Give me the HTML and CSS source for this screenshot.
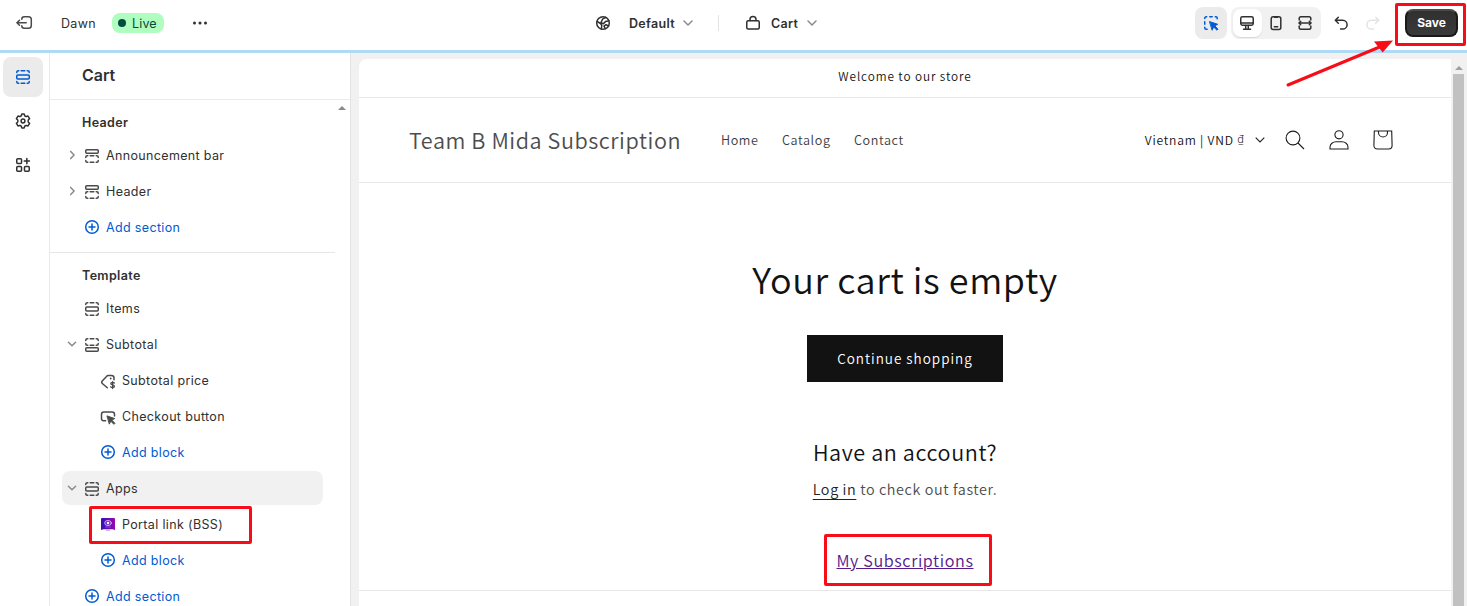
FILE: index.html
```html
<!DOCTYPE html>
<html lang="en">
<head>
<meta charset="utf-8">
<title>Dawn - Cart</title>
<link rel="stylesheet" href="styles.css">
</head>
<body>
<svg class="defs" width="0" height="0" aria-hidden="true">
  <defs>
    <g id="sec-mid">
      <rect x="3.75" y="8" width="12.5" height="4" rx="1"/>
      <path d="M3.75 5.5v-.3c0-.8.6-1.45 1.45-1.45h.6M8.2 3.75h3.6M14.2 3.75h.6c.8 0 1.45.6 1.45 1.45v.3M3.75 14.5v.3c0 .8.6 1.45 1.45 1.45h.6M8.2 16.25h3.6M14.2 16.25h.6c.8 0 1.45-.6 1.45-1.45v-.3"/>
    </g>
    <g id="sec-top">
      <rect x="3.75" y="3.75" width="12.5" height="3.5" rx="1"/>
      <path d="M3.75 11.4v-.2c0-.8.6-1.45 1.45-1.45h.6M8.2 9.75h3.6M14.2 9.75h.6c.8 0 1.45.6 1.45 1.45v.2M3.75 14.6v.2c0 .8.6 1.45 1.45 1.45h.6M8.2 16.25h3.6M14.2 16.25h.6c.8 0 1.45-.6 1.45-1.45v-.2"/>
    </g>
    <g id="sec-bottom">
      <rect x="3.75" y="12.75" width="12.5" height="3.5" rx="1"/>
      <path d="M3.75 5.4v-.2c0-.8.6-1.45 1.45-1.45h.6M8.2 3.75h3.6M14.2 3.75h.6c.8 0 1.45.6 1.45 1.45v.2M3.75 8.6v.2c0 .8.6 1.45 1.45 1.45h.6M8.2 10.25h3.6M14.2 10.25h.6c.8 0 1.45-.6 1.45-1.45v-.2"/>
    </g>
    <g id="plus-circle"><circle cx="10" cy="10" r="6.3"/><path d="M10 7v6M7 10h6"/></g>
    <path id="chev-down" d="M6 8l4 4 4-4"/>
    <path id="chev-right" d="M8.7 6.4l3.4 3.6-3.4 3.6"/>
    <path id="chev-small" d="M6.4 8.300L10 11.700l3.600-3.400"/>
  </defs>
</svg>
<div class="app">
  <header class="topbar">
    <div class="theme">
      <svg class="icon exit" viewBox="0 0 20 20"><path d="M6.800 6.200c0-1.600.9-2.500 2.400-2.500h4.300c1.700 0 2.800 1 2.800 2.800v6c0 1.700-1.100 2.800-2.800 2.800H9.200c-1.500 0-2.400-.9-2.400-2.500M11.200 9.700H2M4.500 7.200L1.900 9.700l2.600 2.500"/></svg>
      <span class="theme-name">Dawn</span>
      <span class="badge"><i class="dot"></i>Live</span>
      <svg class="icon more" viewBox="0 0 20 20"><g fill="currentColor" stroke="none"><circle cx="4.500" cy="10" r="1.500"/><circle cx="10" cy="10" r="1.500"/><circle cx="15.500" cy="10" r="1.500"/></g></svg>
    </div>
    <div class="pickers">
      <svg class="icon globe" viewBox="0 0 20 20"><circle cx="10" cy="10" r="6.300"/><path d="M4 8.300l3.500 2.200 1.300 1.700-.5 3.800M12.800 4.400L9.500 6.200 8 9.600l2.400 1.100 2.300-2.300 3.300-.6M11 13.200l2-1.500 2.600 1.200M11 13.200l1.300 2.500"/></svg>
      <span class="picker-label label-default">Default</span>
      <svg class="icon chev" viewBox="0 0 20 20"><use href="#chev-down"/></svg>
      <i class="sep"></i>
      <svg class="icon bag" viewBox="0 0 20 20"><rect x="3.750" y="7.700" width="12.500" height="8.300" rx="1.500"/><path d="M7 7.500V6.600a3 3 0 0 1 6 0v.9"/></svg>
      <span class="picker-label label-cart">Cart</span>
      <svg class="icon chev" viewBox="0 0 20 20"><use href="#chev-down"/></svg>
    </div>
    <div class="tools">
      <span class="inspector"><svg class="icon blue" viewBox="0 0 20 20"><path d="M3.750 5.600v-.4c0-.8.6-1.450 1.450-1.450h.5M8.800 3.750h2.400M14.300 3.750h.5c.8 0 1.450.6 1.450 1.450v.5M3.750 8.800v2.400M3.750 14.300v.5c0 .8.6 1.450 1.450 1.450h.9"/><path d="M8.800 8.700l7.900 2.600-3 1.500 3.300 3.400-1 1-3.400-3.300-1.300 3z" fill="currentColor" stroke-width="1"/></svg></span>
      <span class="devices">
        <span class="device active"><svg class="icon" viewBox="0 0 20 20"><rect x="3.750" y="3.750" width="12.500" height="8.500" rx="1.700"/><path d="M4 9.900h12M8.700 12.500v3.200M11.300 12.500v3.200M6.500 16.200h7"/></svg></span>
        <span class="device"><svg class="icon" viewBox="0 0 20 20"><rect x="5.200" y="3.750" width="9.600" height="12.700" rx="2"/><path d="M8.500 4.200h3M8.300 13.700h3.400"/></svg></span>
        <span class="device"><svg class="icon" viewBox="0 0 20 20"><path d="M4.200 7V5.500c0-1 .8-1.750 1.750-1.750h8.100c1 0 1.750.8 1.750 1.750V7M4.200 13v1.500c0 1 .8 1.750 1.750 1.750h8.100c1 0 1.750-.8 1.750-1.750V13M3.900 10h12.200M5.700 8.300L3.900 10l1.800 1.700M14.300 8.300l1.800 1.700-1.800 1.700"/></svg></span>
      </span>
      <svg class="icon undo" viewBox="0 0 20 20"><path d="M7.300 4.300L4.300 7.300l3 3M4.500 7.300h7.200a4.400 4.400 0 0 1 0 8.800H9.600"/></svg>
      <svg class="icon redo" viewBox="0 0 20 20"><path d="M12.700 4.300l3 3-3 3M15.500 7.300H8.300a4.400 4.400 0 0 0 0 8.800h2.100"/></svg>
      <button class="save">Save</button>
    </div>
  </header>
  <div class="body">
    <nav class="rail">
      <span class="rail-item active"><svg class="icon blue" viewBox="0 0 20 20"><use href="#sec-mid"/></svg></span>
      <span class="rail-item"><svg class="icon dark" viewBox="0 0 20 20"><path d="M8.300 4.700 L8.800 3.100 H11.200 L11.700 4.700 Q12.200 5.700 13.300 5.500 L15 5.100 L16.600 7.600 L15.400 8.800 Q14.700 10 15.400 11.200 L16.600 12.400 L15 14.900 L13.300 14.500 Q12.200 14.300 11.700 15.300 L11.200 16.900 H8.800 L8.300 15.300 Q7.800 14.300 6.700 14.500 L5 14.900 L3.400 12.400 L4.600 11.200 Q5.300 10 4.600 8.800 L3.400 7.600 L5 5.100 L6.700 5.500 Q7.800 5.700 8.300 4.700z"/><circle cx="10" cy="10" r="1.900"/></svg></span>
      <span class="rail-item"><svg class="icon dark" viewBox="0 0 20 20"><rect x="3.750" y="3.750" width="4.800" height="4.800" rx="1"/><rect x="3.750" y="11.450" width="4.800" height="4.800" rx="1"/><rect x="11.450" y="11.450" width="4.800" height="4.800" rx="1"/><path d="M13.850 3.500v5.200M11.250 6.100h5.200"/></svg></span>
    </nav>
    <aside class="sidebar">
      <h2 class="panel-title">Cart</h2>
      <svg class="scroll-cap" viewBox="0 0 8 4"><path d="M4 0l4 4H0z"/></svg>
      <section class="group">
        <h3 class="group-title">Header</h3>
        <div class="row"><svg class="icon twist" viewBox="0 0 20 20"><use href="#chev-right"/></svg><svg class="icon" viewBox="0 0 20 20"><use href="#sec-top"/></svg><span>Announcement bar</span></div>
        <div class="row"><svg class="icon twist" viewBox="0 0 20 20"><use href="#chev-right"/></svg><svg class="icon" viewBox="0 0 20 20"><use href="#sec-top"/></svg><span>Header</span></div>
        <div class="row leaf add"><svg class="icon" viewBox="0 0 20 20"><use href="#plus-circle"/></svg><span>Add section</span></div>
      </section>
      <section class="group">
        <h3 class="group-title">Template</h3>
        <div class="row leaf"><svg class="icon" viewBox="0 0 20 20"><use href="#sec-mid"/></svg><span>Items</span></div>
        <div class="row"><svg class="icon twist" viewBox="0 0 20 20"><use href="#chev-small"/></svg><svg class="icon" viewBox="0 0 20 20"><use href="#sec-bottom"/></svg><span>Subtotal</span></div>
        <div class="row nested"><svg class="icon" viewBox="0 0 20 20"><path d="M9.300 16.800L4.300 12.500c-.8-.7-.8-1.700-.1-2.400l4.300-4.700c.5-.6 1.100-.8 1.800-.8h3.200c1.500 0 2.500 1 2.500 2.400v1.800"/><circle cx="12.700" cy="7.500" r=".9" fill="currentColor" stroke="none"/><path d="M16.300 12c-.4-.5-1-.7-1.700-.7-1 0-1.800.5-1.800 1.300 0 1.900 3.600.8 3.600 2.700 0 .8-.8 1.300-1.800 1.300-.8 0-1.500-.3-1.900-.8M14.600 10.700v6.800" stroke-width="1.300"/></svg><span>Subtotal price</span></div>
        <div class="row nested"><svg class="icon" viewBox="0 0 20 20"><path d="M7.600 13.800H5.800c-1.300 0-2.300-1-2.300-2.300V7.200c0-1.300 1-2.300 2.300-2.300h8.400c1.300 0 2.300 1 2.300 2.300V9"/><path d="M9.300 9l7.400 2.600-2.900 1.500 3.100 3.200-1 1-3.200-3.200-1.200 2.700z" fill="currentColor" stroke-width="1"/></svg><span>Checkout button</span></div>
        <div class="row nested add"><svg class="icon" viewBox="0 0 20 20"><use href="#plus-circle"/></svg><span>Add block</span></div>
        <div class="row selected"><svg class="icon twist" viewBox="0 0 20 20"><use href="#chev-small"/></svg><svg class="icon" viewBox="0 0 20 20"><use href="#sec-mid"/></svg><span>Apps</span></div>
        <div class="row nested"><svg class="icon" viewBox="0 0 20 20"><defs><linearGradient id="app-fill" x1="0" x2="1"><stop offset="0" stop-color="#3010b8"/><stop offset="1" stop-color="#9a08b0"/></linearGradient></defs><path d="M4 3h12a1 1 0 0 1 1 1v11l-2.500-.8h-9L3 15V4a1 1 0 0 1 1-1z" fill="url(#app-fill)" stroke="none"/><ellipse cx="10" cy="8" rx="3.300" ry="2.500" stroke="#d0b0ff" stroke-width="1"/><circle cx="10" cy="8" r="1.300" fill="#fff" stroke="none"/><path d="M7.500 12h5" stroke="#9a70e8" stroke-width=".7"/><path d="M8.300 15.300h3.400" stroke="#b8a0e8" stroke-width="1"/></svg><span>Portal link (BSS)</span></div>
        <div class="row nested add"><svg class="icon" viewBox="0 0 20 20"><use href="#plus-circle"/></svg><span>Add block</span></div>
        <div class="row leaf add"><svg class="icon" viewBox="0 0 20 20"><use href="#plus-circle"/></svg><span>Add section</span></div>
      </section>
    </aside>
    <main class="stage">
      <div class="preview">
        <div class="announcement">Welcome to our store</div>
        <div class="store-header">
          <span class="store-name">Team B Mida Subscription</span>
          <span class="nav-link home">Home</span><span class="nav-link catalog">Catalog</span><span class="nav-link">Contact</span>
          <span class="locale"><span class="locale-text">Vietnam | VND <span class="dong">₫</span></span><svg class="caret" viewBox="0 0 10 6"><path d="M.7.7L5 5 9.300.7"/></svg></span>
          <svg class="store-icon" viewBox="0 0 20 20"><circle cx="8" cy="8" r="6.900"/><path d="M13 13l6 6"/></svg>
          <svg class="store-icon" viewBox="0 0 20 20"><circle cx="10" cy="4.800" r="4.100"/><path d="M1 19v-1.800c0-3.400 3-5.400 6-5.400h6c3 0 6 2 6 5.400V19z"/></svg>
          <svg class="store-icon" viewBox="0 0 20 20"><path d="M1.300 1h17.400l.4 14.500c0 2-1.500 3.500-3.500 3.500H4.400c-2 0-3.500-1.500-3.500-3.500zM5.500 1v1.500a4.500 4.500 0 0 0 9 0V1"/></svg>
        </div>
        <div class="cart">
          <h1 class="cart-title">Your cart is empty</h1>
          <a class="continue">Continue shopping</a>
          <h2 class="account">Have an account?</h2>
          <p class="login"><a class="login-link">Log in</a> to check out faster.</p>
          <a class="subscriptions">My Subscriptions</a>
        </div>
      </div>
      <div class="scrollbar"><svg class="scroll-arrow" viewBox="0 0 8 4"><path d="M4 0l4 4H0z"/></svg><i class="thumb"></i></div>
    </main>
  </div>
  <i class="mark mark-save"></i>
  <i class="mark mark-portal"></i>
  <i class="mark mark-subs"></i>
  <svg class="arrow" viewBox="0 0 120 60"><path d="M8 55L102 16" stroke="#f80c18" stroke-width="3" stroke-linecap="round"/><path d="M113 10.500L94 11.500 102.700 22.500z" fill="#f80c18"/></svg>
</div>
</body>
</html>
```

FILE: styles.css
```css
* { box-sizing: border-box; }
body { margin: 0; font-family: Inter, "Liberation Sans", sans-serif; font-size: 12.5px; color: #303030; }
h1, h2, h3, p { margin: 0; }
.defs { position: absolute; }
.app { position: relative; width: 1467px; height: 606px; overflow: hidden; background: #fff; display: flex; flex-direction: column; }
.icon { width: 20px; height: 20px; flex: none; fill: none; stroke: currentColor; stroke-width: 1.5; stroke-linecap: round; stroke-linejoin: round; color: #4a4a4a; }
.icon.blue { color: #005bd3; }
.icon.dark { color: #303030; }

.topbar { height: 53px; flex: none; display: flex; align-items: flex-start; border-bottom: 3px solid #b0d9f6; }
.theme { display: flex; align-items: center; height: 46px; padding-left: 15px; width: 594px; }
.theme-name { margin-left: 26px; width: 51px; letter-spacing: .35px; }
.badge { display: flex; align-items: center; gap: 6px; width: 52px; height: 20px; padding-left: 6px; border-radius: 8px; background: #affebf; color: #014b40; letter-spacing: .15px; }
.dot { width: 8px; height: 8px; border-radius: 50%; background: #014b40; }
.more { margin-left: 26px; color: #303030; }
.pickers { display: flex; align-items: center; height: 46px; width: 300px; }
.pickers .globe, .pickers .bag { color: #303030; margin-left: -1px; }
.picker-label { font-weight: 600; letter-spacing: .3px; }
.label-default { margin-left: 16px; width: 49px; }
.label-cart { margin-left: 8px; width: 31px; }
.pickers .chev { color: #8a8a8a; }
.sep { width: 1px; height: 16px; margin: 0 25px 0 20px; background: #e3e3e3; }
.tools { display: flex; align-items: center; height: 46px; padding-right: 9px; margin-left: auto; }
.inspector, .devices { height: 32px; border-radius: 8px; background: #ebebeb; display: flex; align-items: center; }
.inspector { width: 32px; justify-content: center; margin-right: 4px; }
.devices { width: 90px; background: #f1f1f1; padding: 0 2px 0 2px; }
.device { width: 29px; height: 28px; display: flex; align-items: center; justify-content: center; border-radius: 8px; }
.device .icon { color: #303030; }
.device.active { background: #fff; box-shadow: 0 1px 1px #d8d8d8; }
.tools .undo { margin-left: 10px; color: #303030; }
.tools .redo { margin: 0 22px 0 12px; color: #e3e3e3; }
.save { width: 53px; height: 28px; padding: 0 0 2px; border: 2px solid #1a1a1a; border-top-color: #4a4a4a; border-radius: 8px; background: linear-gradient(#303030, #3a3a3a); color: #fff; font: 700 12px Inter, sans-serif; }

.body { display: flex; flex: 1; min-height: 0; }
.rail { width: 50px; border-right: 1px solid #ebebeb; padding: 4px 3px; display: flex; flex-direction: column; gap: 4px; }
.rail-item { width: 40px; height: 40px; border-radius: 8px; display: flex; align-items: center; justify-content: center; }
.rail-item.active { background: #ebebeb; }
.sidebar { position: relative; width: 301px; border-right: 1px solid #e3e3e3; overflow: hidden; }
.panel-title { height: 47px; line-height: 44px; padding-left: 32px; border-bottom: 1px solid #ebebeb; font-size: 16px; font-weight: 600; }
.scroll-cap { position: absolute; top: 53px; right: 4px; width: 8px; height: 4px; fill: #8a8a8a; }
.group { width: 285px; padding: 7px 0; border-bottom: 1px solid #e6e6e6; }
.group-title { height: 30px; line-height: 31px; padding-left: 32px; font-size: 12.5px; font-weight: 600; letter-spacing: .35px; }
.row { display: flex; align-items: center; height: 36px; margin: 0 12px; letter-spacing: .35px; border-radius: 8px; }
.row .icon { margin-top: 1px; }
.row span { margin-left: 4px; }
.row.leaf { padding-left: 20px; }
.row.nested { padding-left: 36px; }
.row.add, .row.add .icon { color: #005bd3; }
.row.add .icon { margin-top: 0; }
.row .twist.icon { color: #8a8a8a; margin-top: 0; }
.row.selected { background: #f1f1f1; width: 261px; height: 34px; margin: 1px 12px; }

.stage { flex: 1; display: flex; background: #f1f1f1; padding: 6px 0 0 8px; }
.preview { width: 1092px; background: #fff; border-radius: 8px 0 0 0; font-family: "Noto Sans CJK SC", sans-serif; font-weight: 350; color: #3d3d3d; overflow: hidden; }
.announcement { height: 39px; line-height: 34px; border-bottom: 1px solid #e8e8e8; text-align: center; font-size: 11.8px; letter-spacing: .9px; color: #121212; }
.store-header { display: flex; align-items: center; height: 85px; padding-left: 50px; border-bottom: 1px solid #e8e8e8; font-size: 12.6px; letter-spacing: .6px; }
.store-name { font-size: 21.6px; width: 312px; letter-spacing: .57px; color: #4d4d4d; white-space: nowrap; padding-bottom: 2px; }
.nav-link { width: 49px; padding-bottom: 2px; }
.nav-link.home { width: 61px; }
.nav-link.catalog { width: 72px; }
.locale { display: flex; align-items: center; margin-left: auto; width: 120px; justify-content: space-between; font-size: 12.1px; letter-spacing: .8px; color: #121212; white-space: nowrap; }
.locale-text { padding-bottom: 2px; }
.dong { font-family: "Noto Sans", sans-serif; font-size: 11px; position: relative; top: -2px; }
.caret { width: 10px; height: 6px; fill: none; stroke: #222; stroke-width: 1.1; }
.store-icon { width: 20px; height: 20px; margin-left: 24.300px; fill: none; stroke: #1c1c1c; stroke-width: 1.1; overflow: visible; flex: none; }
.store-icon:nth-of-type(1) { margin-left: 20px; }
.store-icon:last-child { margin-right: 57.700px; }
.cart { display: flex; flex-direction: column; align-items: center; height: 408px; border-bottom: 1px solid #e8e8e8; color: #121212; }
.cart-title { margin-top: 69px; height: 52px; line-height: 52px; font-size: 36px; font-weight: 350; letter-spacing: .55px; white-space: nowrap; }
.continue { margin-top: 31px; width: 196px; height: 47px; line-height: 46px; background: #121212; color: #fff; text-align: center; font-size: 13.5px; letter-spacing: 1px; }
.account { margin-top: 53px; height: 34px; line-height: 34px; font-size: 21.600px; font-weight: 350; letter-spacing: .6px; white-space: nowrap; }
.login { height: 24px; margin-top: 8px; line-height: 24px; font-size: 14.4px; letter-spacing: .6px; color: #4d4d4d; white-space: nowrap; }
.login-link { color: #222; text-decoration: underline; text-underline-offset: 4px; }
.subscriptions { margin-top: 45px; height: 28px; line-height: 28px; font-size: 16.2px; letter-spacing: .6px; color: #551a8b; text-decoration: underline; white-space: nowrap; }
.scrollbar { width: 16px; padding: 7px 3px 0 2px; display: flex; flex-direction: column; align-items: center; }
.scroll-arrow { width: 8px; height: 4px; fill: #a0a0a0; flex: none; }
.thumb { width: 11px; flex: 1; margin-top: 4px; background: #c1c1c1; }

.mark { position: absolute; border: 3px solid #f80c18; border-radius: 2px; }
.mark-save { left: 1395px; top: 3px; width: 71px; height: 43px; }
.mark-portal { left: 89px; top: 506px; width: 163px; height: 38px; }
.mark-subs { left: 824px; top: 534px; width: 168px; height: 52px; }
.arrow { position: absolute; left: 1280px; top: 30px; width: 120px; height: 60px; fill: none; }
```
